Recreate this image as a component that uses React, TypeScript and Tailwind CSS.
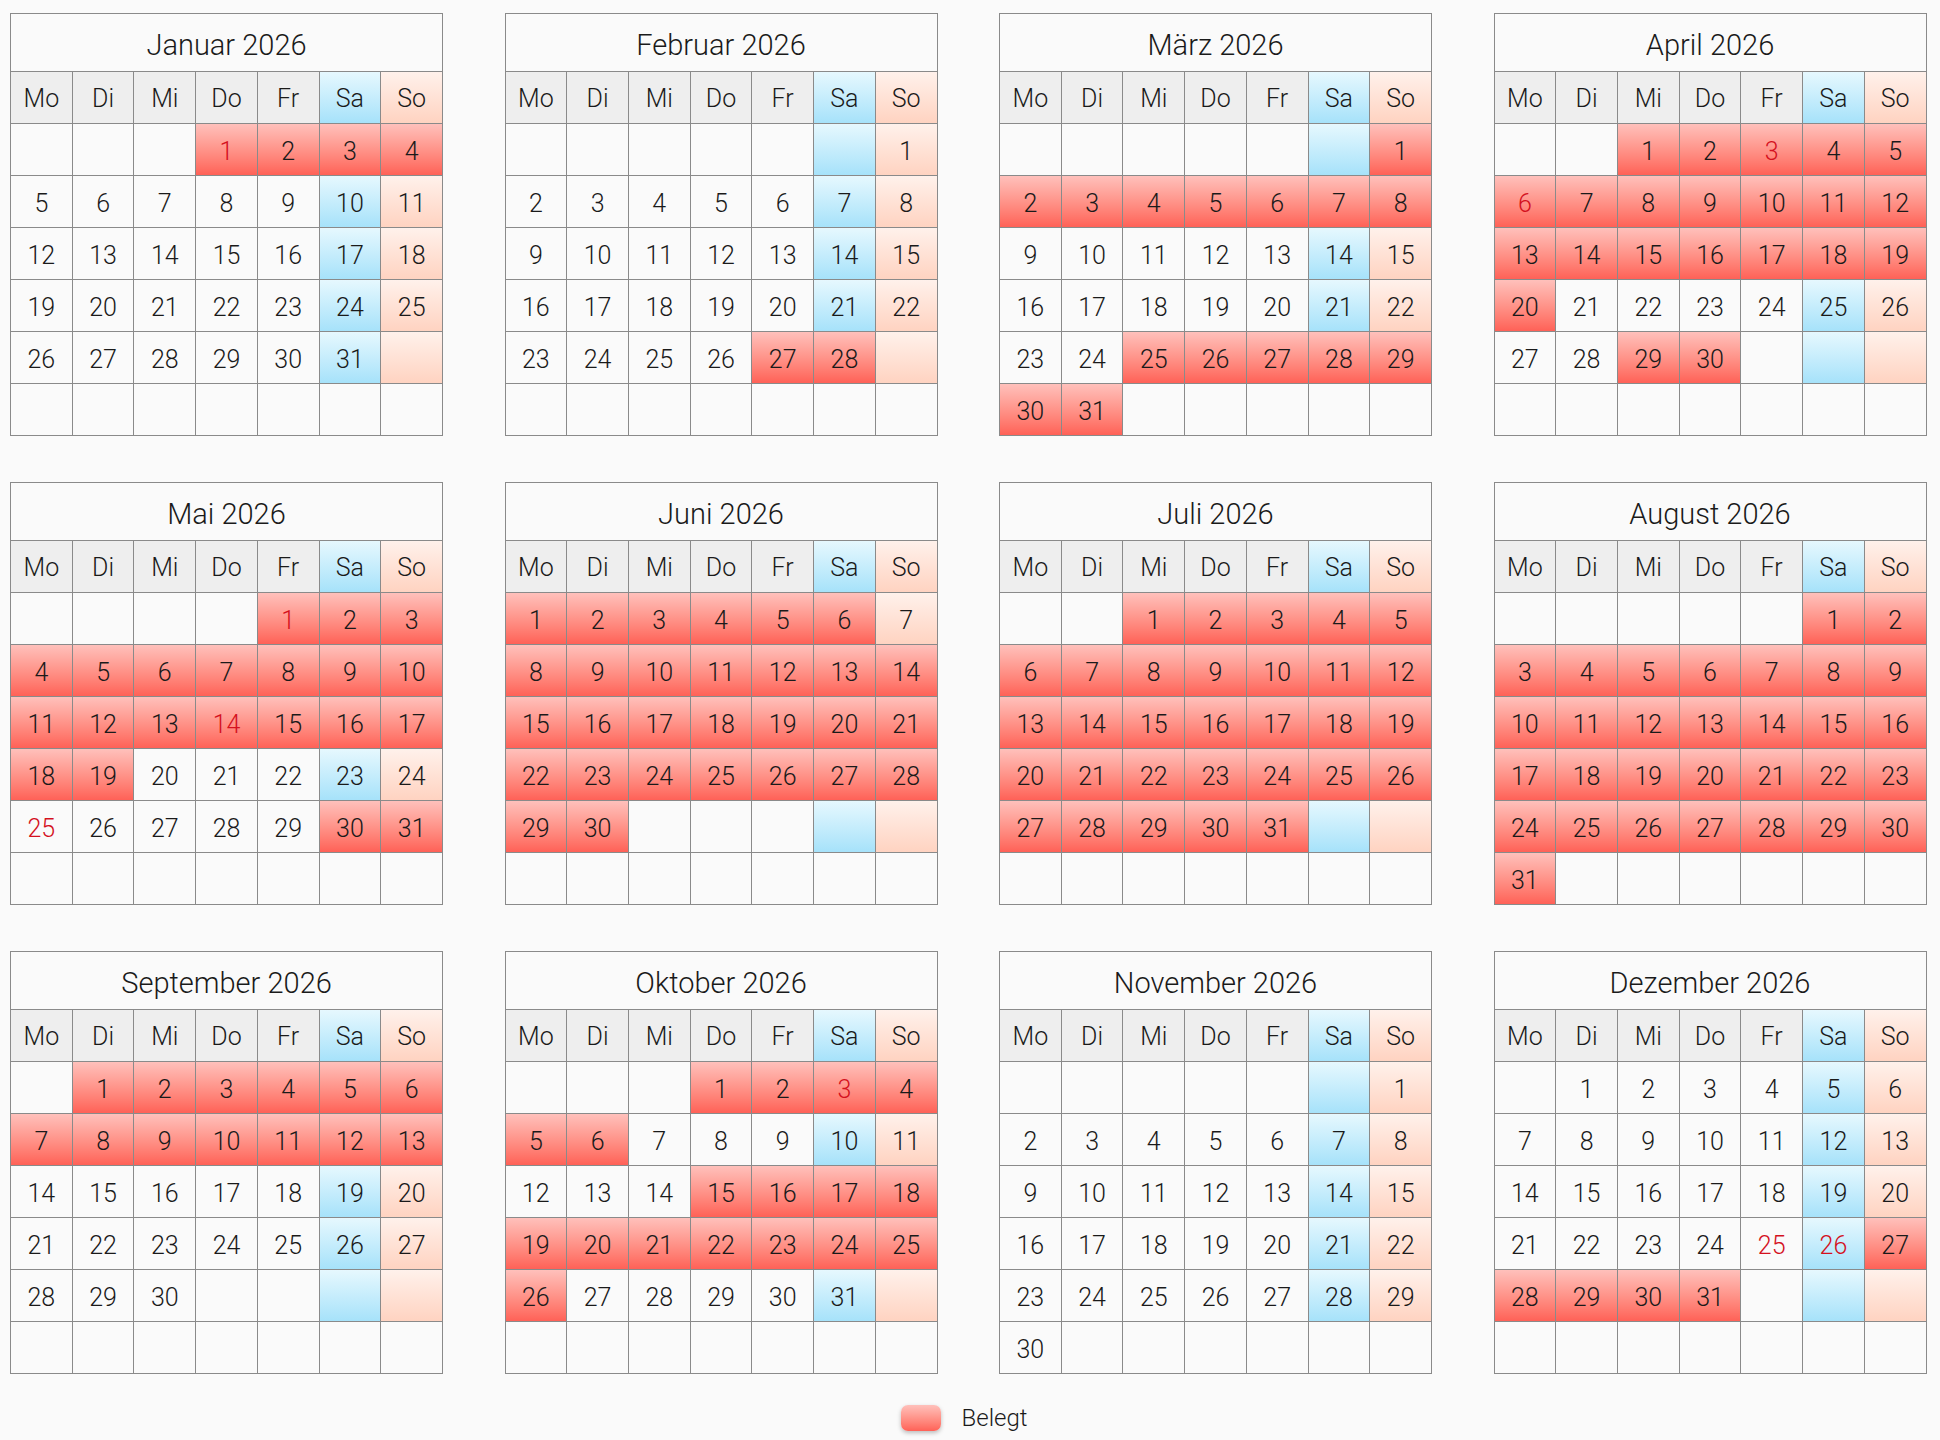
import { useMemo } from "react";

const MONTHS = ["Januar", "Februar", "März", "April", "Mai", "Juni", "Juli", "August", "September", "Oktober", "November", "Dezember"];
const WEEKDAYS = ["Mo", "Di", "Mi", "Do", "Fr", "Sa", "So"];
const YEAR = 2026;

// booked day ranges per month (0-based month index)
const BOOKED: Record<number, [number, number][]> = {
  0: [[1, 4]],
  1: [[27, 28]],
  2: [[1, 8], [25, 31]],
  3: [[1, 20], [29, 30]],
  4: [[1, 19], [30, 31]],
  5: [[1, 6], [8, 30]],
  6: [[1, 31]],
  7: [[1, 31]],
  8: [[1, 13]],
  9: [[1, 6], [15, 26]],
  10: [],
  11: [[27, 31]],
};

const HOLIDAYS: Record<number, number[]> = {
  0: [1],
  3: [3, 6],
  4: [1, 14, 25],
  9: [3],
  11: [25, 26],
};

const RED = "bg-linear-to-b from-[#ffc0bb] to-[#ff6157]";
const BLUE = "bg-linear-to-b from-[#e6f8fe] to-[#a6e2fa]";
const PEACH = "bg-linear-to-b from-[#fff1eb] to-[#ffd3c1]";

function isBooked(month: number, day: number) {
  return (BOOKED[month] ?? []).some(([a, b]) => day >= a && day <= b);
}

function MonthTable({ month }: { month: number }) {
  const cells = useMemo(() => {
    const first = new Date(YEAR, month, 1).getDay();
    const offset = (first + 6) % 7;
    const daysInMonth = new Date(YEAR, month + 1, 0).getDate();
    return Array.from({ length: 42 }, (_, i) => {
      const day = i - offset + 1;
      return { i, row: Math.floor(i / 7), col: i % 7, day: day >= 1 && day <= daysInMonth ? day : null };
    });
  }, [month]);
  const holidays = HOLIDAYS[month] ?? [];

  return (
    <div className="border-l border-t border-[#8a8a8a]">
      <div className="h-[58px] border-r border-b border-[#8a8a8a] flex items-center justify-center text-[29px] text-[#1a1a1a] pt-[7px]">
        {MONTHS[month]} {YEAR}
      </div>
      <div className="grid grid-cols-7">
        {WEEKDAYS.map((w, idx) => (
          <div
            key={w}
            className={`h-[52px] border-r border-b border-[#8a8a8a] flex items-center justify-center text-[25px] text-[#1a1a1a] pt-[3px] ${
              idx === 5 ? BLUE : idx === 6 ? PEACH : "bg-[#eeeeee]"
            }`}
          >
            {w}
          </div>
        ))}
        {cells.map(({ i, row, col, day }) => {
          let bg = "";
          if (day && isBooked(month, day)) bg = RED;
          else if (row < 5 && col === 5) bg = BLUE;
          else if (row < 5 && col === 6) bg = PEACH;
          const red = day && holidays.includes(day);
          return (
            <div
              key={i}
              className={`h-[52px] border-r border-b border-[#8a8a8a] flex items-center justify-center text-[25px] pt-[4px] ${bg} ${
                red ? "text-[#d4111e]" : "text-[#1a1a1a]"
              }`}
            >
              {day ?? ""}
            </div>
          );
        })}
      </div>
    </div>
  );
}

export default function App() {
  return (
    <div
      className="min-h-screen bg-[#fafafa] pt-[13px] pl-[10px] font-light"
      style={{ fontFamily: "Roboto, 'Liberation Sans', sans-serif" }}
    >
      <div className="grid grid-cols-[repeat(4,433px)] gap-x-[61.5px] gap-y-[46px]">
        {MONTHS.map((_, m) => (
          <MonthTable key={m} month={m} />
        ))}
      </div>
      <div className="w-[1918px] flex items-center justify-center gap-[21px] mt-[26px] pr-[10px]">
        <div className={`w-[40px] h-[26px] rounded-[7px] shadow-[0_2px_4px_rgba(0,0,0,0.25)] ${RED}`} />
        <span className="text-[24px] text-[#1a1a1a]">Belegt</span>
      </div>
    </div>
  );
}
